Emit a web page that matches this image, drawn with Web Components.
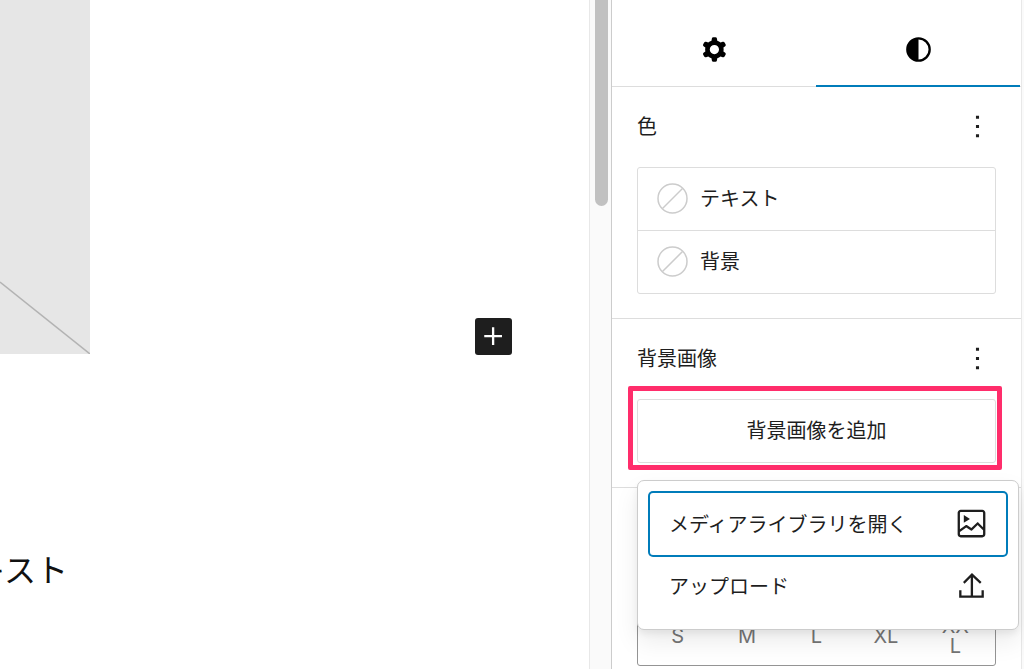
<!DOCTYPE html>
<html lang="ja">
<head>
  <meta charset="UTF-8">
  <meta name="viewport" content="width=device-width, initial-scale=1.0">
  <title>ブロックエディター</title>
  <style>
    html, body {
      height: 100%;
      margin: 0;
    }
    body {
      overflow: hidden;
      font-family: "Noto Sans CJK JP", sans-serif;
      font-size: 20px;
      line-height: 28px;
      color: #1e1e1e;
      background: #fff;
    }
  </style>
</head>
<body>
  <block-editor>
    <editor-canvas slot="canvas">キスト</editor-canvas>
    <editor-sidebar slot="sidebar">
      <tools-panel heading="色">
        <color-list>
          <color-item>テキスト</color-item>
          <color-item>背景</color-item>
        </color-list>
      </tools-panel>
      <tools-panel heading="背景画像">
        <background-picker label="背景画像を追加">
          <menu-item icon="media" active>メディアライブラリを開く</menu-item>
          <menu-item icon="upload">アップロード</menu-item>
        </background-picker>
      </tools-panel>
      <tools-panel>
        <size-picker sizes="S,M,L,XL,XXL"></size-picker>
      </tools-panel>
    </editor-sidebar>
  </block-editor>

  <script>
    const icons = {
      cog: '<path fill-rule="evenodd" clip-rule="evenodd" d="M10.289 4.836A1 1 0 0111.275 4h1.306a1 1 0 01.987.836l.244 1.466c.787.26 1.503.679 2.108 1.218l1.393-.522a1 1 0 011.216.437l.653 1.13a1 1 0 01-.23 1.273l-1.148.944a6.025 6.025 0 010 2.435l1.149.946a1 1 0 01.23 1.272l-.653 1.13a1 1 0 01-1.216.437l-1.394-.522c-.605.54-1.32.958-2.108 1.218l-.244 1.466a1 1 0 01-.987.836h-1.306a1 1 0 01-.986-.836l-.244-1.466a5.995 5.995 0 01-2.108-1.218l-1.394.522a1 1 0 01-1.217-.436l-.653-1.131a1 1 0 01.23-1.272l1.149-.946a6.026 6.026 0 010-2.435l-1.148-.944a1 1 0 01-.23-1.272l.653-1.131a1 1 0 011.217-.437l1.393.522a5.994 5.994 0 012.108-1.218l.244-1.466zM14.929 12a3 3 0 11-6 0 3 3 0 016 0z"/>',
      styles: '<path fill-rule="evenodd" clip-rule="evenodd" d="M20 12a8 8 0 1 1-16 0 8 8 0 0 1 16 0Zm-1.5 0a6.5 6.5 0 0 1-6.5 6.5v-13a6.5 6.5 0 0 1 6.5 6.5Z"/>',
      more: '<path d="M13 19h-2v-2h2v2zm0-6h-2v-2h2v2zm0-6h-2V5h2v2z"/>',
      plus: '<path d="M11 12.5V17.5H12.5V12.5H17.5V11H12.5V6H11V11H6V12.5H11Z"/>',
      media: '<path d="m7 6.5 4 2.5-4 2.5z"/><path fill-rule="evenodd" clip-rule="evenodd" d="m5 3c-1.10457 0-2 .89543-2 2v14c0 1.1046.89543 2 2 2h14c1.1046 0 2-.8954 2-2v-14c0-1.10457-.8954-2-2-2zm14 1.5h-14c-.27614 0-.5.22386-.5.5v10.7072l3.62953-2.6465c.25108-.1831.58905-.1924.84981-.0234l2.92666 1.8969 3.5712-3.4719c.2911-.2831.7545-.2831 1.0456 0l2.9772 2.8945v-9.3568c0-.27614-.2239-.5-.5-.5zm-14.5 14.5v-1.4364l4.09643-2.987 2.99567 1.9417c.2936.1903.6798.1523.9307-.0917l3.4772-3.3806 3.4772 3.3806.0228-.0234v2.5968c0 .2761-.2239.5-.5.5h-14c-.27614 0-.5-.2239-.5-.5z"/>',
      upload: '<path d="M18.5 15v3.5H13V6.7l4.5 4.1 1-1.1-6.2-5.8-5.8 5.8 1 1.1 4-4v11.7h-6V15H4v5h16v-5z"/>'
    };

    const svg = name => `<svg viewBox="0 0 24 24" width="37" height="37" fill="currentColor" aria-hidden="true">${icons[name]}</svg>`;

    // Shared reset for the buttons inside each shadow root
    const base = `
      *, *::before, *::after { box-sizing: border-box; }
      svg { display: block; flex: none; }
      button {
        margin: 0;
        padding: 0;
        border: 0;
        background: none;
        color: inherit;
        font: inherit;
        cursor: pointer;
      }
    `;

    // Canvas, scrollbar and sidebar side by side
    class BlockEditor extends HTMLElement {
      constructor() {
        super();
        this.attachShadow({ mode: 'open' });
      }

      connectedCallback() {
        this.shadowRoot.innerHTML = `
          <style>
            ${base}
            :host {
              display: flex;
              height: 100%;
              overflow: hidden;
              background: #fafafa;
            }
            slot[name="canvas"]::slotted(*) {
              flex: 1;
              min-width: 0;
            }
            .scrollbar {
              flex: none;
              width: 22px;
              padding: 0 3px 0 5px;
              border-left: 1px solid #e8e8e8;
            }
            .thumb {
              width: 13px;
              height: 206px;
              border-radius: 0 0 7px 7px;
              background: #c1c1c1;
            }
            slot[name="sidebar"]::slotted(*) {
              flex: none;
              width: 411px;
              margin-right: 2px;
            }
          </style>
          <slot name="canvas"></slot>
          <div class="scrollbar"><div class="thumb"></div></div>
          <slot name="sidebar"></slot>
        `;
      }
    }

    class EditorCanvas extends HTMLElement {
      constructor() {
        super();
        this.attachShadow({ mode: 'open' });
      }

      connectedCallback() {
        this.shadowRoot.innerHTML = `
          <style>
            ${base}
            :host {
              display: block;
              overflow: hidden;
              background: #fff;
            }
            .media {
              display: flex;
              justify-content: space-between;
              align-items: flex-end;
              padding-right: 77px;
            }
            .placeholder {
              width: 90px;
              height: 354px;
              background: #e6e6e6;
            }
            .add {
              margin-bottom: -1px;
              border-radius: 3px;
              background: #1e1e1e;
              color: #fff;
            }
            /* The block is scrolled past the left edge, so its first letter is cut */
            p {
              display: flex;
              justify-content: flex-end;
              width: 68px;
              margin: 190px 0 0;
              font-size: 32px;
              line-height: 48px;
              white-space: nowrap;
              color: #111;
            }
          </style>
          <div class="media">
            <svg class="placeholder" viewBox="0 0 90 354" aria-hidden="true">
              <path d="M0 282L90 354" stroke="#b3b3b3" stroke-width="1.5"/>
            </svg>
            <button class="add" type="button" aria-label="ブロックを追加">${svg('plus')}</button>
          </div>
          <p><slot></slot></p>
        `;
      }
    }

    class EditorSidebar extends HTMLElement {
      constructor() {
        super();
        this.attachShadow({ mode: 'open' });
      }

      connectedCallback() {
        this.shadowRoot.innerHTML = `
          <style>
            ${base}
            :host {
              display: block;
              box-sizing: border-box;
              border-left: 1px solid #ccc;
              border-right: 1px solid #e8e8e8;
              background: #fff;
            }
            .tabs {
              display: flex;
              padding: 14px 1px 0 0;
              border-bottom: 1px solid #ddd;
            }
            .tab {
              display: flex;
              flex: 1;
              justify-content: center;
              align-items: center;
              height: 73px;
              margin-bottom: -1px;
              border-bottom: 2px solid transparent;
              color: #000;
            }
            .tab[aria-selected="true"] { border-color: #007cba; }
          </style>
          <div class="tabs" role="tablist">
            <button class="tab" type="button" role="tab" aria-selected="false" aria-label="設定">${svg('cog')}</button>
            <button class="tab" type="button" role="tab" aria-selected="true" aria-label="スタイル">${svg('styles')}</button>
          </div>
          <slot></slot>
        `;

        const tabs = this.shadowRoot.querySelectorAll('.tab');
        tabs.forEach(tab => {
          tab.addEventListener('click', () => {
            tabs.forEach(other => other.setAttribute('aria-selected', other === tab));
          });
        });
      }
    }

    class ToolsPanel extends HTMLElement {
      constructor() {
        super();
        this.attachShadow({ mode: 'open' });
      }

      connectedCallback() {
        const heading = this.getAttribute('heading');
        this.shadowRoot.innerHTML = `
          <style>
            ${base}
            :host {
              display: block;
              padding: 0 25px 24px;
              border-bottom: 1px solid #ddd;
            }
            :host(:last-of-type) { border-bottom: 0; }
            header {
              display: flex;
              justify-content: space-between;
              align-items: center;
              height: 80px;
              padding-bottom: 2px;
            }
            h2 {
              margin: 0;
              font-size: 20px;
              font-weight: 400;
            }
          </style>
          <header>
            ${heading ? `<h2>${heading}</h2><button type="button" aria-label="${heading}のオプション">${svg('more')}</button>` : ''}
          </header>
          <slot></slot>
        `;
      }
    }

    class ColorList extends HTMLElement {
      constructor() {
        super();
        this.attachShadow({ mode: 'open' });
      }

      connectedCallback() {
        this.shadowRoot.innerHTML = `
          <style>
            :host {
              display: grid;
              gap: 1px;
              border: 1px solid #ddd;
              border-radius: 3px;
              background: #ddd;
              overflow: hidden;
            }
          </style>
          <slot></slot>
        `;
      }
    }

    class ColorItem extends HTMLElement {
      constructor() {
        super();
        this.attachShadow({ mode: 'open' });
      }

      connectedCallback() {
        this.shadowRoot.innerHTML = `
          <style>
            ${base}
            :host { display: block; }
            button {
              display: flex;
              align-items: center;
              gap: 12px;
              width: 100%;
              height: 62px;
              padding: 0 19px 2px;
              background: #fff;
              text-align: left;
            }
          </style>
          <button type="button">
            <svg viewBox="0 0 31 31" width="31" height="31" fill="none" stroke="#ccc" aria-hidden="true">
              <circle cx="15.5" cy="15.5" r="14.5" stroke-width="1.5"/>
              <path d="M5.5 25.5L25.5 5.5" stroke-width="1.5"/>
            </svg>
            <span><slot></slot></span>
          </button>
        `;
      }
    }

    // Button with its open menu; the menu floats over the next panel
    class BackgroundPicker extends HTMLElement {
      constructor() {
        super();
        this.attachShadow({ mode: 'open' });
      }

      connectedCallback() {
        this.shadowRoot.innerHTML = `
          <style>
            ${base}
            :host {
              display: block;
              position: relative;
            }
            .toggle {
              display: block;
              width: 100%;
              height: 64px;
              padding-bottom: 2px;
              border: 1px solid #ddd;
              border-radius: 3px;
            }
            .highlight {
              position: absolute;
              inset: -13px -6px -7px -9px;
              border: 5px solid #ff2d6b;
              border-radius: 2px;
              pointer-events: none;
            }
            .menu {
              position: absolute;
              z-index: 1;
              top: calc(100% + 17px);
              left: 0;
              right: -23px;
              padding: 12px;
              border: 1px solid #ccc;
              border-radius: 7px;
              background: #fff;
              box-shadow: 0 4px 6px rgba(0, 0, 0, 0.06), 0 12px 24px rgba(0, 0, 0, 0.08);
            }
            .menu[hidden] { display: none; }
          </style>
          <button class="toggle" type="button" aria-haspopup="menu" aria-expanded="true">${this.getAttribute('label')}</button>
          <div class="highlight"></div>
          <div class="menu" role="menu"><slot></slot></div>
        `;

        const toggle = this.shadowRoot.querySelector('.toggle');
        const menu = this.shadowRoot.querySelector('.menu');
        toggle.addEventListener('click', () => {
          menu.hidden = !menu.hidden;
          toggle.setAttribute('aria-expanded', !menu.hidden);
        });
      }
    }

    class MenuItem extends HTMLElement {
      constructor() {
        super();
        this.attachShadow({ mode: 'open' });
      }

      connectedCallback() {
        this.shadowRoot.innerHTML = `
          <style>
            ${base}
            :host { display: block; }
            button {
              display: flex;
              justify-content: space-between;
              align-items: center;
              width: 100%;
              height: 62px;
              padding: 0 16px 1px 19px;
              border-radius: 3px;
              text-align: left;
            }
            :host([active]) button { box-shadow: 0 0 0 2px #007cba; }
          </style>
          <button type="button" role="menuitem"><span><slot></slot></span>${svg(this.getAttribute('icon'))}</button>
        `;
      }
    }

    class SizePicker extends HTMLElement {
      constructor() {
        super();
        this.attachShadow({ mode: 'open' });
      }

      connectedCallback() {
        const sizes = this.getAttribute('sizes').split(',');
        this.shadowRoot.innerHTML = `
          <style>
            ${base}
            :host {
              display: block;
              padding-top: 36px;
            }
            fieldset {
              display: flex;
              min-width: 0;
              height: 62px;
              margin: 0;
              padding: 2px 5px 0;
              border: 1px solid #949494;
              border-radius: 3px;
            }
            label {
              display: flex;
              flex: 1 1 0;
              min-width: 0;
              justify-content: center;
              align-items: center;
              padding: 0 18px;
              font-family: Inter, sans-serif;
              font-size: 20px;
              line-height: 20px;
              text-align: center;
              color: #757575;
            }
            span { word-break: break-all; }
            input {
              appearance: none;
              width: 0;
              height: 0;
              margin: 0;
            }
          </style>
          <fieldset aria-label="サイズ">
            ${sizes.map(size => `<label><input type="radio" name="size" value="${size}"><span>${size}</span></label>`).join('')}
          </fieldset>
        `;
      }
    }

    customElements.define('block-editor', BlockEditor);
    customElements.define('editor-canvas', EditorCanvas);
    customElements.define('editor-sidebar', EditorSidebar);
    customElements.define('tools-panel', ToolsPanel);
    customElements.define('color-list', ColorList);
    customElements.define('color-item', ColorItem);
    customElements.define('background-picker', BackgroundPicker);
    customElements.define('menu-item', MenuItem);
    customElements.define('size-picker', SizePicker);
  </script>
</body>
</html>
